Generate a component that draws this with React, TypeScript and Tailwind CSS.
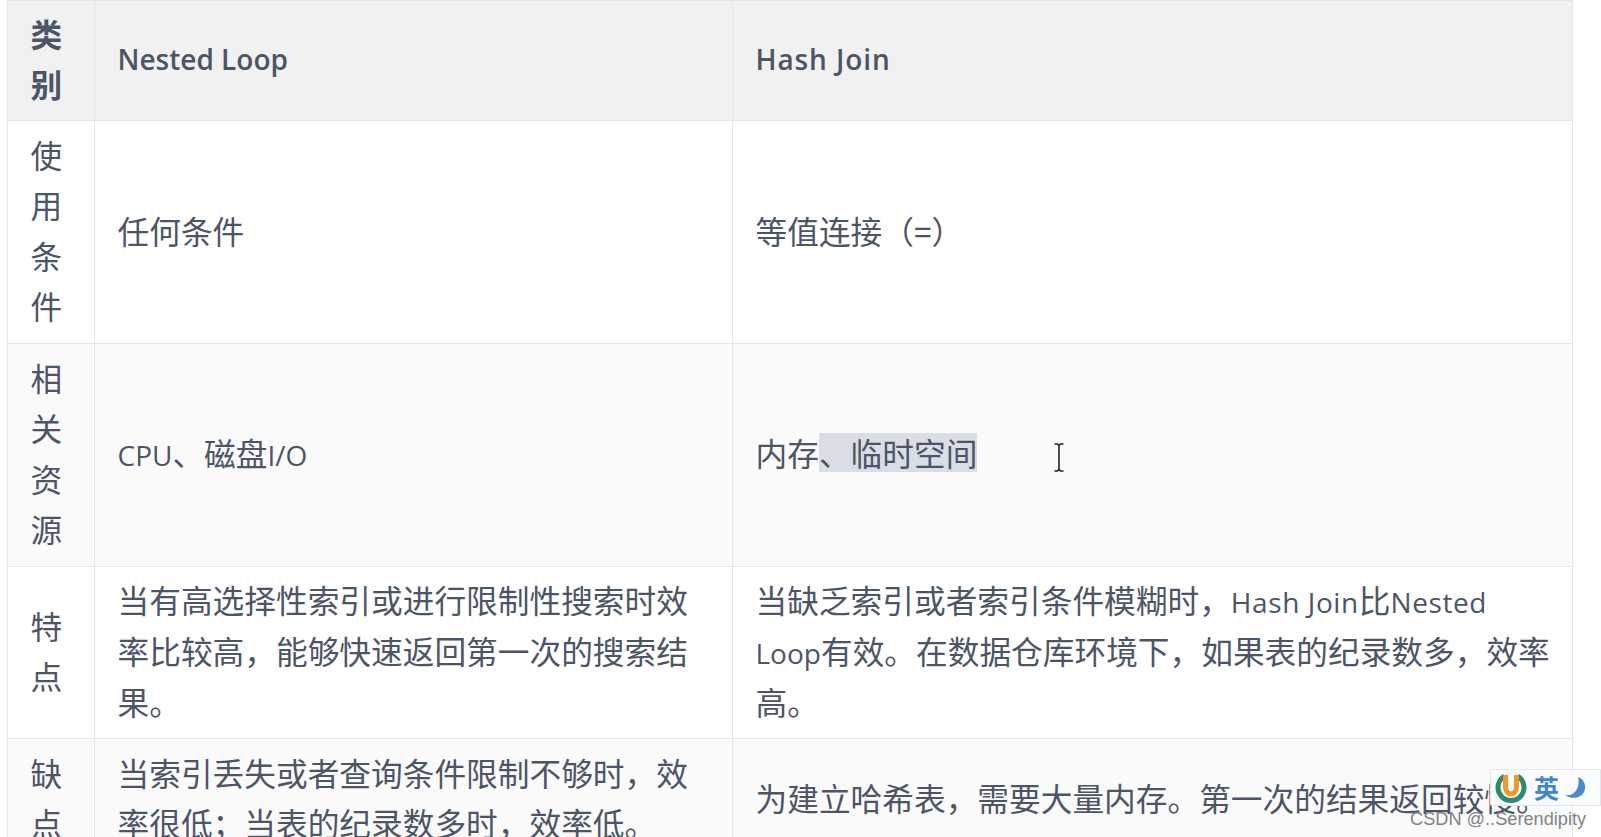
const cellFont = "[font-family:'Noto_Sans_CJK_SC','Noto_Sans',sans-serif]";

const td = "border border-[#e4e6e9] px-[22.5px] pt-[7.5px] pb-[12px] align-middle";
const th = "border border-[#e4e6e9] px-[22.5px] pt-[6.5px] pb-[11.5px] align-middle font-semibold text-left";

// latin runs sit smaller than the CJK around them in the reference
function Latin({ children, className = "" }: { children: string; className?: string }) {
  return <span className={`text-[28px] leading-none [font-family:'Open_Sans',sans-serif] ${className}`}>{children}</span>;
}

function ImeBar() {
  return (
    <div className="absolute left-[1490px] top-[769px] flex h-[37px] w-[111px] items-center gap-[7px] rounded-l-[2px] border border-[#e3e6ea] bg-[#fbfcfd]/95 pl-[4px]">
      <svg width="32" height="32" viewBox="0 0 32 32" fill="none">
        <path d="M9.5 4.2A13 13 0 1 0 22.5 4.2" stroke="#2f8a6e" strokeWidth="5" />
        <path d="M10.5 3v12a5.5 7 0 0 0 11 0V3" stroke="#f0992b" strokeWidth="5" />
      </svg>
      <span className="text-[25px] leading-none font-bold text-[#3f86cc]">英</span>
      <svg width="24" height="24" viewBox="0 0 24 24" className="-ml-[2px]">
        <path d="M14 1c6 2 9 9 6 15-3 6-12 8-19 3 6 1 10-2 12-6 2-4 2-8 1-12z" fill="#4a8ad4" />
      </svg>
    </div>
  );
}

export default function App() {
  return (
    <div className={`relative h-[837px] w-[1601px] overflow-hidden bg-white text-[31.7px] leading-[50.6px] text-[#4c5567] ${cellFont}`}>
      <div className="pl-[7px]">
        <table lang="zh-CN" className="w-[1565px] table-fixed border-collapse">
          <colgroup>
            <col className="w-[87px]" />
            <col className="w-[638px]" />
            <col className="w-[840px]" />
          </colgroup>
          <thead>
            <tr className="bg-[#f1f1f1]">
              <th className={th}>类别</th>
              <th className={`${th} !pb-[15.5px]`}><Latin>Nested Loop</Latin></th>
              <th className={`${th} !pb-[15.5px]`}><Latin className="tracking-[0.9px]">Hash Join</Latin></th>
            </tr>
          </thead>
          <tbody>
            <tr className="bg-white">
              <td className={td}>使用条件</td>
              <td className={td}>任何条件</td>
              <td className={td}>等值连接（=）</td>
            </tr>
            <tr className="bg-[#fafafa]">
              <td className={td}>相关资源</td>
              <td className={td}><Latin>CPU</Latin>、磁盘<Latin>I/O</Latin></td>
              <td className={td}>
                内存<span className="inline-block h-[39px] bg-[#d9dee4] leading-[39px]">、临时空间</span>
              </td>
            </tr>
            <tr className="bg-white">
              <td className={td}>特点</td>
              <td className={td}>当有高选择性索引或进行限制性搜索时效率比较高，能够快速返回第一次的搜索结果。</td>
              <td className={`${td} !pr-[18px]`}>
                当缺乏索引或者索引条件模糊时，<Latin className="tracking-[0.6px]">Hash Join</Latin>比<Latin className="tracking-[0.6px]">Nested</Latin>
                <br />
                <Latin>Loop</Latin>有效。在数据仓库环境下，如果表的纪录数多，效率高。
              </td>
            </tr>
            <tr className="bg-[#fafafa]">
              <td className={td}>缺点</td>
              <td className={td}>当索引丢失或者查询条件限制不够时，效率很低；当表的纪录数多时，效率低。</td>
              <td className={td}>为建立哈希表，需要大量内存。第一次的结果返回较慢。</td>
            </tr>
          </tbody>
        </table>
      </div>

      {/* text cursor */}
      <svg className="absolute left-[1053px] top-[443px]" width="12" height="29" viewBox="0 0 12 29" fill="none" stroke="#222" strokeWidth="1.6">
        <path d="M1.5 1h3l1.5 1.5L7.5 1h3M6 2.5v24M1.5 28h3L6 26.5 7.5 28h3" />
      </svg>

      <ImeBar />

      <div className="absolute left-[1410px] top-[808px] text-[18.2px] leading-[22px] text-[#7f8288] [font-family:'Liberation_Sans',sans-serif]">
        CSDN @..Serendipity
      </div>
    </div>
  );
}
